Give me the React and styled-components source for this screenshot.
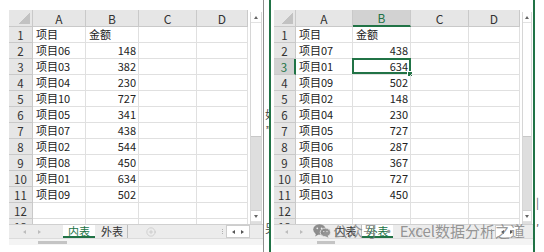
import React from "react";
import styled, { createGlobalStyle, css } from "styled-components";
import { CirclePlus } from "lucide-react";

const GREEN = "#217346";
const FONT = `"Noto Sans CJK SC", "Noto Sans", sans-serif`;

const Global = createGlobalStyle`
  html, body { margin: 0; padding: 0; background: #fff; }
  body { font-family: ${FONT}; }
`;

const Page = styled.div`
  display: flex;
  width: 544px;
  height: 252px;
  overflow: hidden;
  background: #fff;
`;

const Window = styled.div`
  position: relative;
  flex: none;
  display: flex;
  flex-direction: column;
  height: 252px;
  padding-top: 10px;
  box-sizing: border-box;
  ${p =>
    p.$side === "left"
      ? css`
          width: 264px;
          padding-left: 9px;
          border-right: 1px solid #8e8e8e;
        `
      : css`
          width: 266px;
          padding-left: 3px;
          border-left: 2px solid ${GREEN};
          border-right: 2px solid ${GREEN};
        `}
`;

const Main = styled.div`
  display: flex;
  height: 214px;
`;

const Grid = styled.div`
  display: grid;
  grid-template-columns: ${p => p.$cols.map(c => c + "px").join(" ")};
  grid-template-rows: 17px;
  grid-auto-rows: 16px;
  height: 214px;
  overflow: hidden;
  font-size: 11px;
  color: #222;
`;

const headBase = css`
  box-sizing: border-box;
  background: #e6e6e6;
  border-right: 1px solid #c9c9c9;
  border-bottom: 1px solid #c9c9c9;
  display: flex;
  align-items: center;
  justify-content: center;
  color: #333;
`;

const Corner = styled.div`
  ${headBase};
  background: linear-gradient(135deg, transparent 50%, #c2c2c2 50%) no-repeat right 2px bottom 2px / 11px 11px, #e6e6e6;
`;

const ColHead = styled.div`
  ${headBase};
  font-size: 12px;
  ${p =>
    p.$active &&
    css`
      background: #d2d2d2;
      color: ${GREEN};
      border-bottom: 2px solid ${GREEN};
    `}
`;

const RowHead = styled.div`
  ${headBase};
  font-size: 11.5px;
  ${p =>
    p.$active &&
    css`
      background: #d2d2d2;
      color: ${GREEN};
      border-right: 2px solid ${GREEN};
    `}
`;

const Cell = styled.div`
  position: relative;
  box-sizing: border-box;
  border-right: 1px solid #e0e0e0;
  border-bottom: 1px solid #e0e0e0;
  padding: 0 2px 0 3px;
  line-height: 15px;
  white-space: nowrap;
  text-align: ${p => (p.$num ? "right" : "left")};
  ${p =>
    p.$selected &&
    css`
      &::before {
        content: "";
        position: absolute;
        inset: -1px -1px 0 -1px;
        border: 2px solid ${GREEN};
      }
      &::after {
        content: "";
        position: absolute;
        right: -3px;
        bottom: -3px;
        width: 4px;
        height: 4px;
        background: ${GREEN};
        border: 1px solid #fff;
      }
    `}
`;

const VScroll = styled.div`
  flex: none;
  width: ${p => p.$w}px;
  box-sizing: border-box;
  padding: 2px 1px 0 2px;
  display: flex;
  flex-direction: column;
`;

const Rail = styled.div`
  flex: 1;
  display: flex;
  flex-direction: column;
  border-left: 1px solid #d6d6d6;
  border-right: 1px solid #d6d6d6;
  background: #dedede;
`;

const ScrollBtn = styled.div`
  height: 10px;
  flex: none;
  background: #fff;
  border-bottom: 1px solid #e2e2e2;
  display: flex;
  align-items: center;
  justify-content: center;
  ${p => p.$down && css`border-top: 1px solid #d0d0d0; margin-bottom: 2px;`}
`;

const Thumb = styled.div`
  height: ${p => p.$h}px;
  flex: none;
  background: #fff;
  border-bottom: 1px solid #c8c8c8;
`;

const Track = styled.div`
  flex: 1;
`;

const Tri = styled.span`
  width: 0;
  height: 0;
  border: 2.5px solid transparent;
  ${p => p.$dir === "up" && css`border-bottom: 3px solid ${p.$c || "#666"}; border-top-width: 0;`}
  ${p => p.$dir === "down" && css`border-top: 3px solid ${p.$c || "#666"}; border-bottom-width: 0;`}
  ${p => p.$dir === "left" && css`border-right: 3px solid ${p.$c || "#666"}; border-left-width: 0;`}
  ${p => p.$dir === "right" && css`border-left: 3px solid ${p.$c || "#666"}; border-right-width: 0;`}
`;

const TabBar = styled.div`
  height: 13px;
  flex: none;
  display: flex;
  align-items: stretch;
  background: #ececec;
  border-top: 1px solid #d0d0d0;
  font-size: 11px;
  line-height: 12px;
`;

const NavArrows = styled.div`
  width: ${p => p.$w}px;
  flex: none;
  display: flex;
  align-items: center;
  gap: 12px;
  padding-left: ${p => p.$pad}px;
  box-sizing: border-box;
`;

const Tab = styled.div`
  width: ${p => p.$w}px;
  flex: none;
  box-sizing: border-box;
  text-align: center;
  color: #333;
  border-right: 1px solid #bdbdbd;
  ${p =>
    p.$active &&
    css`
      background: #fff;
      color: ${GREEN};
      border-bottom: 2px solid ${GREEN};
      border-right: none;
      margin-right: 2px;
    `}
`;

const AddSheet = styled.div`
  width: 45px;
  flex: none;
  display: flex;
  align-items: center;
  justify-content: center;
`;

const Spacer = styled.div`
  flex: 1;
`;

const Dots = styled.div`
  width: 8px;
  flex: none;
  display: flex;
  flex-direction: column;
  justify-content: center;
  align-items: center;
  gap: 1px;
  &::before, &::after, span {
    content: "";
    width: 1px;
    height: 1px;
    background: #b0b0b0;
  }
`;

const NavBox = styled.div`
  width: 24px;
  flex: none;
  box-sizing: border-box;
  margin-right: ${p => p.$mr}px;
  background: #fff;
  border: 1px solid #cdcdcd;
  display: flex;
  align-items: center;
  justify-content: space-around;
  padding: 0 2px;
`;

const BottomStrip = styled.div`
  height: 7px;
  flex: none;
  background: #f4f4f4;
  border-top: 1px solid #dcdcdc;
  box-sizing: border-box;
  display: flex;
  align-items: flex-end;
  padding-bottom: 1px;
`;

const HThumb = styled.div`
  margin-left: ${p => p.$x}px;
  width: ${p => p.$w}px;
  height: 3px;
  background: #c4c4c4;
`;

const Gap = styled.div`
  width: 5px;
  flex: none;
  overflow: hidden;
  display: flex;
  flex-direction: column;
  font-size: 11px;
  line-height: 12px;
  color: #444;
`;

const Fragment = styled.span`
  margin-top: ${p => p.$top}px;
  margin-left: ${p => p.$left || 0}px;
  white-space: nowrap;
`;

const Edge = styled.div`
  width: 9px;
  flex: none;
  overflow: hidden;
  display: flex;
  flex-direction: column;
  font-size: 11px;
  line-height: 12px;
  color: #555;
`;

const Watermark = styled.div`
  position: absolute;
  left: 42px;
  top: 222px;
  display: flex;
  align-items: center;
  gap: 2px;
  font-size: 15px;
  line-height: 18px;
  color: rgba(125, 125, 125, 0.8);
  white-space: nowrap;
  pointer-events: none;
`;

const WeChat = () => (
  <svg width="18" height="14" viewBox="0 0 18 14">
    <ellipse cx="6.5" cy="5.5" rx="6.3" ry="5.2" fill="rgba(125,125,125,0.85)" />
    <path d="M3 9.5 L2.2 12.5 L5.6 10.4 Z" fill="rgba(125,125,125,0.85)" />
    <circle cx="4.3" cy="4.3" r="0.9" fill="#ececec" />
    <circle cx="8.6" cy="4.3" r="0.9" fill="#ececec" />
    <ellipse cx="12.4" cy="8.4" rx="5.2" ry="4.3" fill="rgba(140,140,140,0.9)" stroke="#ececec" strokeWidth="0.8" />
    <path d="M14.5 11.8 L15.6 13.8 L12.6 12.4 Z" fill="rgba(140,140,140,0.9)" />
    <circle cx="10.8" cy="7.6" r="0.7" fill="#ececec" />
    <circle cx="14" cy="7.6" r="0.7" fill="#ececec" />
  </svg>
);

const LETTERS = ["A", "B", "C", "D"];

function Sheet({ cols, rows, selRow, selCol }) {
  const all = [["项目", "金额"], ...rows, [], []];
  return (
    <Grid $cols={cols}>
      <Corner />
      {LETTERS.map((l, i) => (
        <ColHead key={l} $active={selCol === i}>
          {l}
        </ColHead>
      ))}
      {all.map((r, ri) => (
        <React.Fragment key={ri}>
          <RowHead $active={selRow === ri + 1}>{ri + 1}</RowHead>
          <Cell>{r[0]}</Cell>
          <Cell $num={typeof r[1] === "number"} $selected={selRow === ri + 1 && selCol === 1}>
            {r[1]}
          </Cell>
          <Cell />
          <Cell />
        </React.Fragment>
      ))}
    </Grid>
  );
}

function Scrollbar({ w }) {
  return (
    <VScroll $w={w}>
      <Rail>
        <ScrollBtn>
          <Tri $dir="up" />
        </ScrollBtn>
        <Thumb $h={113} />
        <Track />
        <ScrollBtn $down>
          <Tri $dir="down" />
        </ScrollBtn>
      </Rail>
    </VScroll>
  );
}

function Tabs({ active, navW, navPad, boxMr }) {
  return (
    <TabBar>
      <NavArrows $w={navW} $pad={navPad}>
        <Tri $dir="left" $c="#bcbcbc" />
        <Tri $dir="right" $c="#bcbcbc" />
      </NavArrows>
      <Tab $w={32} $active={active === 0}>内表</Tab>
      <Tab $w={31} $active={active === 1}>外表</Tab>
      <AddSheet>
        <CirclePlus size={10} strokeWidth={1.4} color="#bdbdbd" />
      </AddSheet>
      <Spacer />
      <Dots>
        <span />
      </Dots>
      <NavBox $mr={boxMr}>
        <Tri $dir="left" $c="#555" />
        <Tri $dir="right" $c="#555" />
      </NavBox>
    </TabBar>
  );
}

const LEFT_ROWS = [
  ["项目06", 148],
  ["项目03", 382],
  ["项目04", 230],
  ["项目10", 727],
  ["项目05", 341],
  ["项目07", 438],
  ["项目02", 544],
  ["项目08", 450],
  ["项目01", 634],
  ["项目09", 502],
];

const RIGHT_ROWS = [
  ["项目07", 438],
  ["项目01", 634],
  ["项目09", 502],
  ["项目02", 148],
  ["项目04", 230],
  ["项目05", 727],
  ["项目06", 287],
  ["项目08", 367],
  ["项目10", 727],
  ["项目03", 450],
];

export default function App() {
  return (
    <Page>
      <Global />
      <Window $side="left">
        <Main>
          <Sheet cols={[24, 53, 53, 58, 51]} rows={LEFT_ROWS} />
          <Scrollbar w={15} />
        </Main>
        <Tabs active={0} navW={54} navPad={14} boxMr={13} />
        <BottomStrip>
          <HThumb $x={29} $w={29} />
        </BottomStrip>
      </Window>
      <Gap>
        <Fragment $top={108} $left={1}>如</Fragment>
        <Fragment $top={5} $left={2}>”</Fragment>
        <Fragment $top={85} $left={1}>另</Fragment>
      </Gap>
      <Window $side="right">
        <Main>
          <Sheet cols={[22, 57, 58, 58, 51]} rows={RIGHT_ROWS} selRow={3} selCol={1} />
          <Scrollbar w={13} />
        </Main>
        <Tabs active={1} navW={56} navPad={11} boxMr={14} />
        <BottomStrip>
          <HThumb $x={43} $w={18} />
        </BottomStrip>
        <Watermark>
          <WeChat />
          <span>公众号 · Excel数据分析之道</span>
        </Watermark>
      </Window>
      <Edge>
        <Fragment $top={196} $left={1}>|</Fragment>
        <Fragment $top={14} $left={1}>′</Fragment>
      </Edge>
    </Page>
  );
}
